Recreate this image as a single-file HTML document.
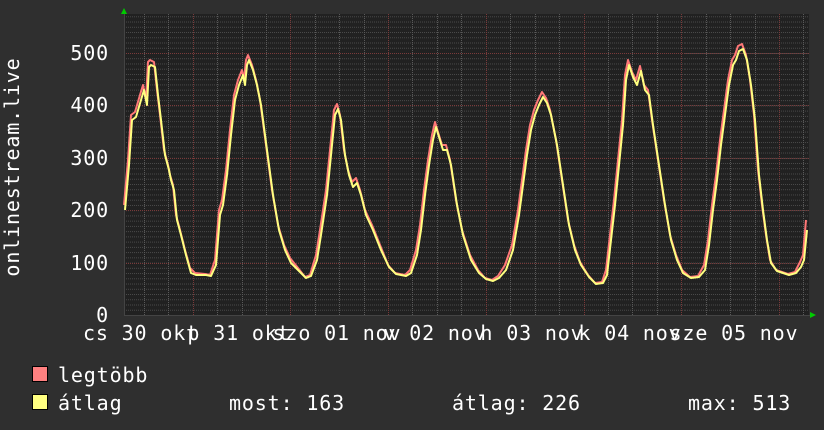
<!DOCTYPE html>
<html><head><meta charset="utf-8"><style>
html,body{margin:0;padding:0;background:#2f2f2f;}
svg{display:block}
text{font-family:"DejaVu Sans Mono","Liberation Mono",monospace;fill:#fff;font-size:20px;letter-spacing:0.85px}
</style></head><body>
<svg width="824" height="430" viewBox="0 0 824 430" xmlns="http://www.w3.org/2000/svg">
<rect width="824" height="430" fill="#2f2f2f"/>
<rect x="124" y="14" width="685" height="301" fill="#212121"/>
<defs>
<pattern id="hg" x="0" y="315" width="685" height="5.24" patternUnits="userSpaceOnUse">
<line x1="0" y1="0.5" x2="685" y2="0.5" stroke="#4a4a4a" stroke-width="1" stroke-dasharray="1,1"/>
</pattern>
</defs>
<rect x="124" y="14" width="685" height="301" fill="url(#hg)"/>
<g stroke="#5a5a5a" stroke-width="1" stroke-dasharray="1,1">
<line x1="144.5" y1="14" x2="144.5" y2="315"/><line x1="168.5" y1="14" x2="168.5" y2="315"/><line x1="217.5" y1="14" x2="217.5" y2="315"/><line x1="242.5" y1="14" x2="242.5" y2="315"/><line x1="266.5" y1="14" x2="266.5" y2="315"/>
<line x1="315.5" y1="14" x2="315.5" y2="315"/><line x1="339.5" y1="14" x2="339.5" y2="315"/><line x1="364.5" y1="14" x2="364.5" y2="315"/>
<line x1="412.5" y1="14" x2="412.5" y2="315"/><line x1="437.5" y1="14" x2="437.5" y2="315"/><line x1="461.5" y1="14" x2="461.5" y2="315"/>
<line x1="510.5" y1="14" x2="510.5" y2="315"/><line x1="535.5" y1="14" x2="535.5" y2="315"/><line x1="559.5" y1="14" x2="559.5" y2="315"/>
<line x1="608.5" y1="14" x2="608.5" y2="315"/><line x1="632.5" y1="14" x2="632.5" y2="315"/><line x1="657.5" y1="14" x2="657.5" y2="315"/>
<line x1="706.5" y1="14" x2="706.5" y2="315"/><line x1="730.5" y1="14" x2="730.5" y2="315"/><line x1="755.5" y1="14" x2="755.5" y2="315"/><line x1="803.5" y1="14" x2="803.5" y2="315"/>
</g>
<g stroke="#7a3a3a" stroke-width="1" stroke-dasharray="1,1">
<line x1="124" y1="53.5" x2="809" y2="53.5"/><line x1="124" y1="105.5" x2="809" y2="105.5"/><line x1="124" y1="158.5" x2="809" y2="158.5"/><line x1="124" y1="210.5" x2="809" y2="210.5"/><line x1="124" y1="263.5" x2="809" y2="263.5"/>
<line x1="193.5" y1="14" x2="193.5" y2="315"/><line x1="290.5" y1="14" x2="290.5" y2="315"/><line x1="388.5" y1="14" x2="388.5" y2="315"/><line x1="486.5" y1="14" x2="486.5" y2="315"/><line x1="584.5" y1="14" x2="584.5" y2="315"/><line x1="681.5" y1="14" x2="681.5" y2="315"/><line x1="779.5" y1="14" x2="779.5" y2="315"/>
</g>
<line x1="124" y1="315.5" x2="812" y2="315.5" stroke="#444"/>
<line x1="124.5" y1="12" x2="124.5" y2="315" stroke="#444"/>
<polygon points="121,14 127,14 124,8" fill="#0c0"/>
<polygon points="810,312 810,318 816,315" fill="#0c0"/>
<g fill="none" stroke-width="2" stroke-linejoin="round">
<polyline stroke="#ff7878" points="124,205 128,160 131,115 135,112 140,95 143,85 146,100 148,62 150,60 154,62 157,90 160,115 164,150 168,165 170,175 173,185 176,215 180,230 185,250 190,268 195,273 205,274 210,275 215,260 219,210 222,200 226,170 230,130 234,95 238,80 242,70 244,80 246,60 248,55 252,65 256,80 260,100 264,130 268,160 272,190 278,225 284,245 290,258 298,268 305,277 310,275 316,255 320,230 326,190 330,150 334,110 337,104 340,115 344,150 348,170 352,182 356,178 360,190 365,210 372,225 380,245 388,265 395,273 405,275 410,270 416,250 420,225 424,190 428,160 432,135 435,122 438,132 442,145 446,145 450,160 456,200 462,230 470,255 478,270 485,278 492,280 498,276 505,265 512,245 518,210 522,180 526,150 530,125 534,110 538,100 542,92 546,98 550,110 556,140 562,180 568,220 574,245 580,262 588,275 595,283 602,282 606,270 610,235 614,200 618,160 622,120 625,75 628,60 632,72 636,80 640,66 644,85 648,90 652,120 658,160 664,200 670,235 676,255 682,270 690,277 698,276 704,265 708,240 712,205 716,175 720,140 724,110 728,80 732,60 735,55 738,46 742,44 746,55 750,80 754,115 758,170 762,205 766,235 770,260 776,270 782,272 788,274 795,272 800,262 803,255 806,220"/>
<polyline stroke="#ffff80" transform="translate(1,5)" points="124,205 128,160 131,115 135,112 140,95 143,85 146,100 148,62 150,60 154,62 157,90 160,115 164,150 168,165 170,175 173,185 176,215 180,230 185,250 190,268 195,270 205,270 210,271 215,260 219,210 222,200 226,170 230,130 234,95 238,80 242,70 244,80 246,60 248,55 252,65 256,80 260,100 264,130 268,160 272,190 278,225 284,245 290,258 298,266 305,273 310,271 316,255 320,230 326,190 330,150 334,110 337,104 340,115 344,150 348,170 352,182 356,178 360,190 365,210 372,225 380,245 388,262 395,269 405,271 410,268 416,250 420,225 424,190 428,160 432,135 435,122 438,132 442,145 446,145 450,160 456,200 462,230 470,255 478,268 485,274 492,276 498,273 505,265 512,245 518,210 522,180 526,150 530,125 534,110 538,100 542,92 546,98 550,110 556,140 562,180 568,220 574,245 580,260 588,272 595,279 602,278 606,270 610,235 614,200 618,160 622,120 625,75 628,60 632,72 636,80 640,66 644,85 648,90 652,120 658,160 664,200 670,235 676,255 682,268 690,273 698,272 704,265 708,240 712,205 716,175 720,140 724,110 728,80 732,60 735,55 738,46 742,44 746,55 750,80 754,115 758,170 762,205 766,235 770,258 776,266 782,268 788,270 795,268 800,262 803,255 806,225"/>
</g>
<g text-anchor="end">
<text x="109" y="60">500</text><text x="109" y="112">400</text><text x="109" y="165">300</text><text x="109" y="217">200</text><text x="109" y="270">100</text><text x="109" y="322">0</text>
</g>
<g text-anchor="middle">
<text x="141" y="340">cs 30 okt</text><text x="239" y="340">p 31 okt</text><text x="337" y="340">szo 01 nov</text><text x="435" y="340">v 02 nov</text><text x="532" y="340">h 03 nov</text><text x="630" y="340">k 04 nov</text><text x="734" y="340">sze 05 nov</text>
</g>
<text transform="translate(19,167) rotate(-90)" text-anchor="middle">onlinestream.live</text>
<rect x="32.5" y="366.5" width="15" height="15" fill="#ff8080" stroke="#000"/>
<rect x="32.5" y="394.5" width="15" height="15" fill="#ffff80" stroke="#000"/>
<text x="58" y="382">legtöbb</text>
<text x="58" y="410">átlag</text>
<text x="229" y="410">most: 163</text>
<text x="452" y="410">átlag: 226</text>
<text x="688" y="410">max: 513</text>
</svg>
</body></html>
